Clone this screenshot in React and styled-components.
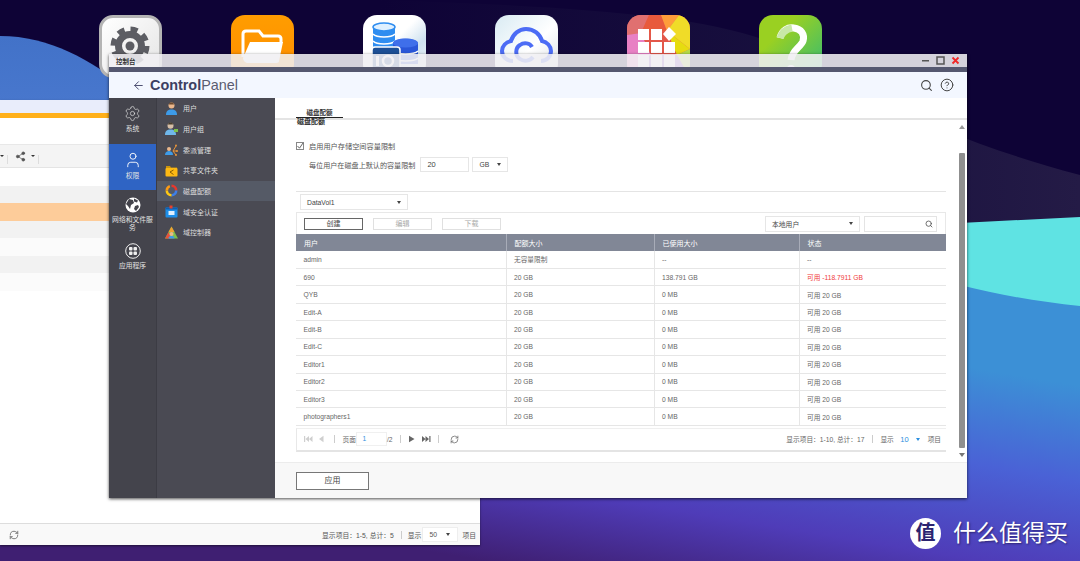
import React from 'react';
import styled, { createGlobalStyle } from 'styled-components';
import { ArrowLeft, CircleHelp, RefreshCw, Search, Settings, Share2, User } from 'lucide-react';

const FONT = '"Liberation Sans", "Noto Sans CJK SC", sans-serif';

const rows = [
	['admin', '无容量限制', '--', '--'],
	['690', '20 GB', '138.791 GB', '可用 -118.7911 GB'],
	['QYB', '20 GB', '0 MB', '可用 20 GB'],
	['Edit-A', '20 GB', '0 MB', '可用 20 GB'],
	['Edit-B', '20 GB', '0 MB', '可用 20 GB'],
	['Edit-C', '20 GB', '0 MB', '可用 20 GB'],
	['Editor1', '20 GB', '0 MB', '可用 20 GB'],
	['Editor2', '20 GB', '0 MB', '可用 20 GB'],
	['Editor3', '20 GB', '0 MB', '可用 20 GB'],
	['photographers1', '20 GB', '0 MB', '可用 20 GB'],
];

const backStripes = ['#ffffff', '#f2f2f2', '#fdcc9a', '#f2f2f2', '#fbfbfb', '#f2f2f2', '#fbfbfb'];

function GearTile() {
	return (
		<AppTile $bg="linear-gradient(135deg, #ffffff, #e4e4e4)" $border="3px solid #b4b4b4">
			<svg width="57" height="57" viewBox="0 0 57 57">
				<circle cx="28" cy="28" r="16.5" fill="none" stroke="#5c5d63" strokeWidth="6" strokeDasharray="7 5.96" />
				<circle cx="28" cy="28" r="11.5" fill="none" stroke="#5c5d63" strokeWidth="7" />
				<circle cx="28" cy="28" r="4.5" fill="#5c5d63" />
			</svg>
		</AppTile>
	);
}

function FolderTile() {
	return (
		<AppTile $bg="linear-gradient(#ff9d00, #ff8c00)">
			<svg width="63" height="63" viewBox="0 0 63 63">
				<path d="M12 42V19c0-2 1-3 3-3h13l4 5h15c2 0 3 1 3 3v4" fill="none" stroke="#fff" strokeWidth="3" />
				<path d="M19 27h33l-4 19c0 1-1 2-3 2H17c-2 0-5-2-5-5z" fill="#fff" />
			</svg>
		</AppTile>
	);
}

function DriveTile() {
	return (
		<AppTile $bg="linear-gradient(135deg, #ffffff 45%, #cfe2f0 68%, #f4f8fb)">
			<svg width="63" height="63" viewBox="0 0 63 63">
				<path d="M10 12c0-5 22-5 22 0v24H10z" fill="#2f8df0" />
				<ellipse cx="21" cy="12" rx="11" ry="4" fill="#dff0ff" stroke="#2f8df0" strokeWidth="1.5" />
				<path d="M10 19c4 4 18 4 22 0M10 26c4 4 18 4 22 0" fill="none" stroke="#fff" strokeWidth="1.6" />
				<path d="M30 36V29c0-7 25-7 25 0v20H30z" fill="#2a56d8" />
				<ellipse cx="42.5" cy="28" rx="12.5" ry="4.5" fill="#3f6fea" />
				<path d="M30 36c4 4 21 4 25 0M30 43c4 4 21 4 25 0" fill="none" stroke="#fff" strokeWidth="1.5" />
				<rect x="9" y="32" width="28" height="30" rx="3" fill="#1c4f96" stroke="#fff" strokeWidth="1.5" />
				<rect x="13" y="41" width="3" height="10" fill="#fff" />
				<circle cx="25" cy="46" r="5" fill="none" stroke="#fff" strokeWidth="2.5" />
			</svg>
		</AppTile>
	);
}

function CloudTile() {
	return (
		<AppTile $bg="linear-gradient(135deg, #d9ebf3, #ffffff 55%, #d8dde2)">
			<svg width="63" height="63" viewBox="0 0 63 63">
				<path
					d="M18 46c-6 0-11-4-11-10 0-5 4-9 9-10 2-7 8-12 15-12 8 0 14 5 16 12 5 1 9 5 9 10s-4 10-10 10"
					fill="none"
					stroke="#4c6cf5"
					strokeWidth="4"
				/>
				<path d="M37 32c-2-4-8-5-12-2-5 3-5 11 0 14 4 3 10 2 13-2" fill="none" stroke="#4c6cf5" strokeWidth="4" />
			</svg>
		</AppTile>
	);
}

function AppsTile() {
	return (
		<AppTile $bg="#e2655f">
			<svg width="63" height="63" viewBox="0 0 63 63">
				<polygon points="0,0 22,0 14,18 0,20" fill="#e07070" />
				<polygon points="22,0 34,0 40,16 14,18" fill="#e85a3c" />
				<polygon points="34,0 52,0 40,16" fill="#ff9d3a" />
				<polygon points="52,0 63,0 63,34 40,16" fill="#f0dc28" />
				<polygon points="0,20 14,18 24,40 0,63" fill="#e880c4" />
				<polygon points="14,18 40,16 50,40 24,40" fill="#e3574a" />
				<polygon points="40,16 63,34 50,40" fill="#e6dc10" />
				<polygon points="63,34 63,63 50,40" fill="#b4dc46" />
				<polygon points="24,40 50,40 63,63 0,63" fill="#8a52c8" />
				<rect x="11" y="14" width="11" height="11" fill="#fff" />
				<rect x="24" y="14" width="11" height="11" fill="#fff" />
				<rect x="11" y="27" width="11" height="11" fill="#fff" />
				<rect x="24" y="27" width="11" height="11" fill="#fff" />
				<rect x="37" y="27" width="11" height="11" fill="#fff" />
				<polygon points="42,12 49,19 42,26 36,19" fill="#fff" />
				<rect x="11" y="40" width="11" height="12" fill="#fff" />
				<rect x="24" y="40" width="11" height="12" fill="#fff" />
				<rect x="37" y="40" width="11" height="12" fill="#fff" />
			</svg>
		</AppTile>
	);
}

function HelpTile() {
	return (
		<AppTile $bg="linear-gradient(135deg, #9ad022 30%, #3fbd6a 90%)">
			<svg width="63" height="63" viewBox="0 0 63 63">
				<path d="M21 23c2-8 8-11 14-10 7 1 11 6 9 13-2 6-11 9-12 19" fill="none" stroke="#fff" strokeWidth="7" />
				<path d="M21 23c2-6 7-9 12-10" fill="none" stroke="#c8e8a8" strokeWidth="7" />
				<circle cx="32" cy="54" r="4" fill="#fff" />
			</svg>
		</AppTile>
	);
}

// small coloured icons of the second menu column
function MenuGlyph({ kind }) {
	if (kind === 'user') {
		return (
			<svg width="13" height="13" viewBox="0 0 13 13">
				<circle cx="6.500" cy="3.600" r="3" fill="#eab78c" />
				<path d="M4 1.500c1-1.500 5-1.500 5 1H4z" fill="#6b4a2e" />
				<path d="M1 13c0-4 2-5.500 5.500-5.500S12 9 12 13z" fill="#3d9be8" />
			</svg>
		);
	}
	if (kind === 'group') {
		return (
			<svg width="13" height="13" viewBox="0 0 13 13">
				<circle cx="5.500" cy="3.800" r="3" fill="#d8c0a8" />
				<path d="M3 2c1-2 5-2 5 0.500H3z" fill="#4a4030" />
				<path d="M0 13c0-4 2-5.500 5.500-5.500S11 9 11 13z" fill="#6fb7ea" />
				<path d="M9 7h4v3H9z" fill="#7cc04a" />
			</svg>
		);
	}
	if (kind === 'delegate') {
		return (
			<svg width="13" height="13" viewBox="0 0 13 13">
				<circle cx="4" cy="6" r="2" fill="#eab78c" />
				<path d="M0 12c0-3 2-4 4-4s4 1 4 4z" fill="#3d9be8" />
				<path d="M8 8l3-5M8 8l4 0M8 8l3 4" stroke="#e8943a" strokeWidth="1" />
				<circle cx="11" cy="2.500" r="1" fill="#e8943a" />
				<circle cx="12" cy="8" r="1" fill="#e8943a" />
				<circle cx="11" cy="12" r="1" fill="#e8943a" />
			</svg>
		);
	}
	if (kind === 'share') {
		return (
			<svg width="13" height="13" viewBox="0 0 13 13">
				<path d="M1 2h4l1 1.500h6V5H1z" fill="#c99410" />
				<rect x="0.500" y="4" width="12" height="8.500" rx="1" fill="#fdb813" />
				<path d="M8.500 6L5 8l3.500 2.500" fill="none" stroke="#7a5200" strokeWidth="0.900" />
			</svg>
		);
	}
	if (kind === 'quota') {
		return (
			<svg width="13" height="13" viewBox="0 0 13 13" fill="none" strokeWidth="2.600">
				<path d="M6.500 1.800a4.700 4.700 0 0 1 4.700 4.700" stroke="#e8372c" />
				<path d="M11.200 6.500a4.700 4.700 0 0 1-4.700 4.700" stroke="#3d7fe8" />
				<path d="M6.500 11.200a4.700 4.700 0 0 1-4.700-4.700" stroke="#fdc813" />
				<path d="M1.800 6.500a4.700 4.700 0 0 1 3-4.400" stroke="#fd9a13" />
			</svg>
		);
	}
	if (kind === 'auth') {
		return (
			<svg width="13" height="13" viewBox="0 0 13 13">
				<rect x="0.500" y="2.500" width="12" height="10" rx="1" fill="#1d8ee8" />
				<rect x="0.500" y="2.500" width="12" height="2" fill="#0e5fb0" />
				<rect x="4.500" y="0.500" width="3" height="3" fill="#e8402c" />
				<rect x="3.500" y="6" width="6" height="4" fill="#dff0ff" />
			</svg>
		);
	}
	return (
		<svg width="13" height="13" viewBox="0 0 13 13">
			<polygon points="6.500,0.500 13,12.500 0,12.500" fill="#7cc04a" />
			<polygon points="6.500,0.500 9.500,6 3.500,6" fill="#f0a030" />
			<polygon points="0,12.500 3.500,6 6.500,12.500" fill="#e8503c" />
			<circle cx="6.500" cy="8" r="2" fill="#eab78c" />
			<path d="M3.500 12.500c0-2 1.500-2.500 3-2.500s3 .5 3 2.500z" fill="#3d9be8" />
		</svg>
	);
}

function PageGlyph({ kind, dim }) {
	const color = dim ? '#cfcfcf' : '#666';
	const shapes = {
		first: 'M0 1h1.200v6H0zM1.500 4L5 1v6zM5 4l3.500-3v6z',
		prev: 'M1 4l4.500-3.200v6.400z',
		next: 'M1 .8L6.500 4 1 7.200z',
		last: 'M0 1l3.500 3L0 7zM3.500 1L7 4 3.500 7zM7.300 1h1.200v6H7.300z',
	};
	return (
		<svg width="9" height="8" viewBox="0 0 9 8">
			<path d={shapes[kind]} fill={color} />
		</svg>
	);
}

function App() {
	return (
		<Desktop>
			<GlobalStyle />
			<Wallpaper viewBox="0 0 1080 561" preserveAspectRatio="none">
				<defs>
					<linearGradient id="lower" x1="0.9" y1="0.3" x2="0.45" y2="1">
						<stop offset="0" stopColor="#3c90d6" />
						<stop offset="0.35" stopColor="#4a62d6" />
						<stop offset="0.7" stopColor="#4f3cb8" />
						<stop offset="1" stopColor="#3f1f72" />
					</linearGradient>
					<linearGradient id="hill" x1="0" y1="0" x2="0" y2="1">
						<stop offset="0" stopColor="#4272c8" />
						<stop offset="1" stopColor="#5a86dc" />
					</linearGradient>
					<linearGradient id="haze" x1="0" y1="0" x2="1" y2="0">
						<stop offset="0" stopColor="#0e0336" />
						<stop offset="0.6" stopColor="#18103e" />
						<stop offset="1" stopColor="#241b46" />
					</linearGradient>
				</defs>
				<rect width="1080" height="561" fill="#0e0336" />
				<path d="M380 0C560 6 700 14 770 42 860 90 930 135 1080 175V240H380z" fill="url(#haze)" />
				<path d="M960 223L1080 217V320H960z" fill="#5fe3e3" />
				<path d="M0 36C50 36 90 60 130 90V300H0z" fill="url(#hill)" />
				<path d="M480 300H960V285C1000 295 1040 302 1080 306V561H0V480z" fill="url(#lower)" />
			</Wallpaper>

			<AppDock>
				<GearTile />
				<FolderTile />
				<DriveTile />
				<CloudTile />
				<AppsTile />
				<HelpTile />
			</AppDock>

			<BackWindow>
				<BackHeader />
				<BackAccent />
				<BackBlank />
				<BackToolbar>
					<TinyCaret />
					<ToolDivider />
					<ShareSlot>
						<Share2 size={11} color="#555" fill="#555" strokeWidth={1.5} />
					</ShareSlot>
					<TinyCaret />
					<ToolDivider />
				</BackToolbar>
				{backStripes.map((color, i) => (
					<BackStripe key={i} $color={color} />
				))}
				<BackFill />
				<BackFooter>
					<RefreshCw size={10} color="#666" />
					<BackSummary>
						<span>显示项目：1-5, 总计：5</span>
						<PagerDivider />
						<span>显示</span>
						<BackSizeSelect>
							50
							<Caret />
						</BackSizeSelect>
						<span>项目</span>
					</BackSummary>
				</BackFooter>
			</BackWindow>

			<ControlWindow>
				<TitleBar>
					<TitleText>控制台</TitleText>
					<WindowButtons>
						<svg width="9" height="9" viewBox="0 0 9 9">
							<rect x="1" y="4" width="7" height="1.500" fill="#555" />
						</svg>
						<svg width="9" height="9" viewBox="0 0 9 9">
							<rect x="1" y="1" width="7" height="7" fill="none" stroke="#555" strokeWidth="1.500" />
						</svg>
						<svg width="9" height="9" viewBox="0 0 9 9">
							<path d="M1.500 1.500l6 6M7.500 1.500l-6 6" stroke="#f02828" strokeWidth="1.800" />
						</svg>
					</WindowButtons>
				</TitleBar>
				<AccentStrip />
				<Header>
					<ArrowLeft size={13} color="#4a4d70" strokeWidth={1.8} />
					<Brand>
						<strong>Control</strong>Panel
					</Brand>
					<HeaderTools>
						<Search size={13} color="#444" strokeWidth={2} />
						<CircleHelp size={14} color="#444" strokeWidth={1.7} />
					</HeaderTools>
				</Header>
				<Body>
					<Rail>
						<RailItem>
							<Settings size={17} color="#ddd" strokeWidth={1} />
							<RailLabel>系统</RailLabel>
						</RailItem>
						<RailItem $active>
							<User size={18} color="#fff" strokeWidth={1.2} />
							<RailLabel>权限</RailLabel>
						</RailItem>
						<RailItem>
							<svg width="16" height="16" viewBox="0 0 16 16">
								<circle cx="8" cy="8" r="7.500" fill="#fff" />
								<path d="M4 2l4 1 1 3-3 2-1 4-2-3-2-2zM10 9l3-1 1 2-3 4-2-2z" fill="#44444c" />
								<path d="M9 1.500l4 2-1 2-3-1z" fill="#44444c" />
							</svg>
							<RailLabel>网络和文件服务</RailLabel>
						</RailItem>
						<RailItem>
							<svg width="16" height="16" viewBox="0 0 16 16">
								<circle cx="8" cy="8" r="7.300" fill="none" stroke="#eee" strokeWidth="1" />
								<rect x="4" y="4" width="3.500" height="3.500" rx="1" fill="#eee" />
								<rect x="8.500" y="4" width="3.500" height="3.500" rx="1" fill="#eee" />
								<rect x="4" y="8.500" width="3.500" height="3.500" rx="1" fill="#eee" />
								<rect x="8.500" y="8.500" width="3.500" height="3.500" rx="1" fill="#eee" />
							</svg>
							<RailLabel>应用程序</RailLabel>
						</RailItem>
					</Rail>
					<SubMenu>
						<SubItem><MenuGlyph kind="user" />用户</SubItem>
						<SubItem><MenuGlyph kind="group" />用户组</SubItem>
						<SubItem><MenuGlyph kind="delegate" />委派管理</SubItem>
						<SubItem><MenuGlyph kind="share" />共享文件夹</SubItem>
						<SubItem $active><MenuGlyph kind="quota" />磁盘配额</SubItem>
						<SubItem><MenuGlyph kind="auth" />域安全认证</SubItem>
						<SubItem><MenuGlyph kind="domain" />域控制器</SubItem>
					</SubMenu>
					<Main>
						<TabBar>
							<Tab>磁盘配额</Tab>
						</TabBar>
						<ScrollArea>
							<Content>
								<SectionTitle>磁盘配额</SectionTitle>
								<CheckRow>
									<CheckBox>
										<svg width="8" height="8" viewBox="0 0 8 8">
											<path d="M1.500 4l2 2.200L7 1" fill="none" stroke="#555" strokeWidth="0.900" />
										</svg>
									</CheckBox>
									启用用户存储空间容量限制
								</CheckRow>
								<QuotaRow>
									每位用户在磁盘上默认的容量限制
									<QuotaInput>20</QuotaInput>
									<Select $width={36}>
										GB
										<Caret />
									</Select>
								</QuotaRow>
								<QuotaPanel>
									<VolumeBar>
										<Select $width={108} $height={16}>
											DataVol1
											<Caret />
										</Select>
									</VolumeBar>
									<ActionBar>
										<ActionButton $primary>创建</ActionButton>
										<ActionButton>编辑</ActionButton>
										<ActionButton>下载</ActionButton>
										<ActionRight>
											<Select $width={95} $height={16}>
												本地用户
												<Caret />
											</Select>
											<SearchBox>
												<Search size={8} color="#555" strokeWidth={2.5} />
											</SearchBox>
										</ActionRight>
									</ActionBar>
									<QuotaTable>
										<colgroup>
											<col width="210" />
											<col width="148" />
											<col width="145" />
											<col width="147" />
										</colgroup>
										<thead>
											<tr>
												<HeadCell>用户</HeadCell>
												<HeadCell>配额大小</HeadCell>
												<HeadCell>已使用大小</HeadCell>
												<HeadCell>状态</HeadCell>
											</tr>
										</thead>
										<tbody>
											{rows.map((row) => (
												<tr key={row[0]}>
													<Cell>{row[0]}</Cell>
													<Cell>{row[1]}</Cell>
													<Cell>{row[2]}</Cell>
													<Cell $danger={row[0] === '690'}>{row[3]}</Cell>
												</tr>
											))}
										</tbody>
									</QuotaTable>
									<Pager>
										<PagerSide>
											<PageGlyph kind="first" dim />
											<PageGlyph kind="prev" dim />
											<PagerDivider />
											<span>页面</span>
											<PageInput>1</PageInput>
											<span>/2</span>
											<PagerDivider />
											<PageGlyph kind="next" />
											<PageGlyph kind="last" />
											<PagerDivider />
											<RefreshSlot>
												<RefreshCw size={9} color="#666" />
											</RefreshSlot>
										</PagerSide>
										<PagerSide>
											<span>显示项目：1-10, 总计：17</span>
											<PagerDivider />
											<span>显示</span>
											<BlueValue>10</BlueValue>
											<Caret $blue />
											<span>项目</span>
										</PagerSide>
									</Pager>
								</QuotaPanel>
							</Content>
							<ScrollTrack>
								<ArrowUp />
								<ScrollThumb />
								<ArrowDown />
							</ScrollTrack>
						</ScrollArea>
						<Footer>
							<ApplyButton>应用</ApplyButton>
						</Footer>
					</Main>
				</Body>
			</ControlWindow>

			<Watermark>
				<WatermarkBadge>值</WatermarkBadge>
				<WatermarkText>什么值得买</WatermarkText>
			</Watermark>
		</Desktop>
	);
}

const GlobalStyle = createGlobalStyle`
	html, body {
		margin: 0;
		padding: 0;
		overflow: hidden;
	}
	body {
		font-family: ${FONT};
	}
`;

const Desktop = styled.div`
	position: relative;
	width: 1080px;
	height: 561px;
	overflow: hidden;
	background: #0e0336;
`;

const Wallpaper = styled.svg`
	position: absolute;
	inset: 0;
	width: 1080px;
	height: 561px;
`;

const AppDock = styled.div`
	position: absolute;
	top: 15px;
	left: 99px;
	display: flex;
	gap: 69px;
`;

const AppTile = styled.div`
	width: 63px;
	height: 63px;
	box-sizing: border-box;
	border-radius: 14px;
	overflow: hidden;
	background: ${(p) => p.$bg};
	border: ${(p) => p.$border || 'none'};

	svg {
		display: block;
	}
`;

const BackWindow = styled.div`
	position: absolute;
	top: 100px;
	left: 0;
	width: 480px;
	height: 445px;
	display: flex;
	flex-direction: column;
	background: #fff;
	box-shadow: 0 1px 2px rgba(0, 0, 0, 0.5);
`;

const BackHeader = styled.div`
	height: 13px;
	background: #e9edfb;
`;

const BackAccent = styled.div`
	height: 5px;
	background: #ffb01a;
`;

const BackBlank = styled.div`
	height: 26px;
	background: #fff;
`;

const BackToolbar = styled.div`
	height: 24px;
	display: flex;
	align-items: center;
	gap: 3px;
	background: #f4f4f4;
	border-top: 1px solid #e8e8e8;
	border-bottom: 1px solid #e4e4e4;
	box-sizing: border-box;
`;

const ShareSlot = styled.span`
	display: flex;
	margin: 0 2px 0 4px;
`;

const TinyCaret = styled.span`
	width: 0;
	height: 0;
	border-left: 2px solid transparent;
	border-right: 2px solid transparent;
	border-top: 2.500px solid #333;
`;

const ToolDivider = styled.span`
	width: 1px;
	height: 9px;
	margin-top: 6px;
	background: #ddd;
`;

const BackStripe = styled.div`
	height: 17.500px;
	background: ${(p) => p.$color};
`;

const BackFill = styled.div`
	flex: 1;
	background: #fff;
`;

const BackFooter = styled.div`
	height: 21px;
	display: flex;
	align-items: center;
	justify-content: space-between;
	padding: 0 4px 0 9px;
	background: #f9f9f9;
	border-top: 1px solid #ddd;
`;

const BackSummary = styled.div`
	display: flex;
	align-items: center;
	gap: 3px;
	font-size: 6.800px;
	color: #555;

	span:first-child {
		margin-right: 1px;
	}
`;

const BackSizeSelect = styled.div`
	width: 36px;
	height: 15px;
	box-sizing: border-box;
	padding: 0 6px;
	margin: 0 1px 0 -2px;
	display: flex;
	align-items: center;
	justify-content: space-between;
	background: #fff;
	border: 1px solid #eee;
`;

const ControlWindow = styled.div`
	position: absolute;
	top: 54px;
	left: 109px;
	width: 858px;
	height: 444px;
	display: flex;
	flex-direction: column;
	box-shadow: 0 1px 3px rgba(0, 0, 0, 0.7);
`;

const TitleBar = styled.div`
	height: 13px;
	display: flex;
	align-items: center;
	justify-content: space-between;
	padding: 0 7px;
	background: rgba(240, 239, 243, 0.88);
`;

const TitleText = styled.span`
	font-size: 6.500px;
	font-weight: 700;
	color: #333;
`;

const WindowButtons = styled.div`
	display: flex;
	gap: 6px;

	svg {
		display: block;
	}
`;

const AccentStrip = styled.div`
	height: 5px;
	background: #555870;
`;

const Header = styled.div`
	height: 26px;
	display: flex;
	align-items: center;
	padding: 0 13px 0 23px;
	background: #f3f7ff;
`;

const Brand = styled.div`
	margin-left: 5px;
	font-size: 14.400px;
	color: #5a5c70;

	strong {
		color: #3c3f63;
	}
`;

const HeaderTools = styled.div`
	margin-left: auto;
	display: flex;
	align-items: center;
	gap: 7px;
`;

const Body = styled.div`
	flex: 1;
	min-height: 0;
	display: flex;
`;

const Rail = styled.nav`
	width: 48px;
	background: #44444c;
	border-right: 1px solid #3c3c44;
	box-sizing: border-box;
`;

const RailItem = styled.div`
	height: 46px;
	box-sizing: border-box;
	padding: 7px 2px 0;
	display: flex;
	flex-direction: column;
	align-items: center;
	gap: 3px;
	text-align: center;
	background: ${(p) => (p.$active ? '#2f64c4' : 'transparent')};
`;

const RailLabel = styled.span`
	font-size: 6.800px;
	line-height: 7.500px;
	color: #e2e2e2;
`;

const SubMenu = styled.nav`
	width: 118px;
	background: #4a4a53;
`;

const SubItem = styled.div`
	height: 20.670px;
	display: flex;
	align-items: center;
	gap: 5px;
	padding-left: 8px;
	font-size: 7px;
	color: #dedede;
	background: ${(p) => (p.$active ? '#555a66' : 'transparent')};

	svg {
		flex: none;
	}
`;

const Main = styled.main`
	flex: 1;
	min-width: 0;
	display: flex;
	flex-direction: column;
	background: #fff;
`;

const TabBar = styled.div`
	height: 20px;
	padding-left: 21px;
	border-bottom: 2px solid #e4e4e4;
`;

const Tab = styled.div`
	width: 47px;
	height: 20px;
	box-sizing: border-box;
	padding-top: 11px;
	border-bottom: 1.500px solid #222;
	font-size: 6.500px;
	line-height: 7px;
	font-weight: 700;
	text-align: center;
	color: #333;
`;

const ScrollArea = styled.div`
	height: 342px;
	display: flex;
`;

const Content = styled.div`
	flex: 1;
	min-width: 0;
	padding-left: 21px;
	padding-right: 12px;
`;

const SectionTitle = styled.div`
	margin: -2px 0 0 1px;
	height: 8px;
	font-size: 7px;
	line-height: 8px;
	font-weight: 700;
	color: #333;
`;

const CheckRow = styled.div`
	margin-top: 14px;
	height: 12px;
	display: flex;
	align-items: center;
	gap: 5px;
	font-size: 7.200px;
	color: #555;
`;

const CheckBox = styled.span`
	width: 6px;
	height: 6px;
	display: flex;
	align-items: center;
	justify-content: center;
	border: 1px solid #888;
	background: #fff;

	svg {
		flex: none;
	}
`;

const QuotaRow = styled.div`
	margin-top: 5px;
	margin-left: 13px;
	height: 15px;
	display: flex;
	align-items: center;
	font-size: 7.100px;
	color: #555;
`;

const QuotaInput = styled.div`
	margin: 0 3px 0 5px;
	width: 49px;
	height: 15px;
	box-sizing: border-box;
	padding-left: 6px;
	border: 1px solid #e6e6e6;
	font-size: 7.500px;
	line-height: 13px;
	color: #444;
`;

const Select = styled.div`
	width: ${(p) => p.$width}px;
	height: ${(p) => p.$height || 15}px;
	box-sizing: border-box;
	padding: 0 6px;
	display: flex;
	align-items: center;
	justify-content: space-between;
	border: 1px solid #e6e6e6;
	background: #fff;
	font-size: 6.800px;
	color: #444;
`;

const Caret = styled.span`
	width: 0;
	height: 0;
	margin-left: ${(p) => (p.$blue ? '3px' : '0')};
	margin-right: ${(p) => (p.$blue ? '3px' : '0')};
	border-left: 2.500px solid transparent;
	border-right: 2.500px solid transparent;
	border-top: 3px solid ${(p) => (p.$blue ? '#2b8fe0' : '#444')};
`;

const QuotaPanel = styled.section`
	margin-top: 19px;
	border-top: 1px solid #e4e4e4;
`;

const VolumeBar = styled.div`
	height: 20px;
	padding: 2px 0 0 4px;
	box-sizing: border-box;
`;

const ActionBar = styled.div`
	height: 22px;
	box-sizing: border-box;
	display: flex;
	align-items: center;
	gap: 10px;
	padding: 0 8px 0 7px;
	border: 1px solid #e8e8e8;
	border-bottom: none;
`;

const ActionButton = styled.div`
	width: 59px;
	height: 12px;
	box-sizing: border-box;
	border: 1px solid ${(p) => (p.$primary ? '#666' : '#e0e0e0')};
	font-size: 7px;
	line-height: 10px;
	text-align: center;
	color: ${(p) => (p.$primary ? '#444' : '#aaa')};
`;

const ActionRight = styled.div`
	margin-left: auto;
	display: flex;
	gap: 4px;
`;

const SearchBox = styled.div`
	width: 73px;
	height: 16px;
	box-sizing: border-box;
	padding-right: 3px;
	display: flex;
	align-items: center;
	justify-content: flex-end;
	border: 1px solid #e4e4e4;
`;

const QuotaTable = styled.table`
	width: 650px;
	table-layout: fixed;
	border-collapse: collapse;
`;

const HeadCell = styled.th`
	height: 17px;
	padding: 0 0 0 8px;
	background: #818796;
	border-left: 1px solid #a8acb8;
	font-size: 7px;
	font-weight: 400;
	text-align: left;
	color: #fff;

	&:first-child {
		border-left: none;
	}
`;

const Cell = styled.td`
	height: 17.440px;
	box-sizing: border-box;
	padding: 0 0 0 7.500px;
	border-bottom: 1px solid #e6e6e6;
	border-left: 1px solid #e6e6e6;
	font-size: 6.700px;
	color: ${(p) => (p.$danger ? '#f03a3a' : '#666')};

	&:first-child {
		border-left: none;
	}
`;

const Pager = styled.div`
	margin-top: 2px;
	height: 24px;
	box-sizing: border-box;
	display: flex;
	align-items: center;
	justify-content: space-between;
	padding: 0 5px 0 7px;
	border-top: 1px solid #efefef;
	border-left: 1px solid #e8e8e8;
	border-bottom: 2px solid #e4e4e4;
	font-size: 6.700px;
	color: #666;
`;

const PagerSide = styled.div`
	display: flex;
	align-items: center;
	gap: 4.500px;

	svg {
		flex: none;
	}
`;

const PagerDivider = styled.span`
	width: 1px;
	height: 8px;
	margin: 0 3px;
	background: #ccc;
`;

const PageInput = styled.div`
	width: 31px;
	height: 14px;
	box-sizing: border-box;
	padding-left: 5px;
	margin: 0 -5px 0 -4px;
	border: 1px solid #f0f0f0;
	line-height: 12px;
	color: #2b8fe0;
`;

const RefreshSlot = styled.span`
	display: flex;
	margin-left: 3px;
`;

const BlueValue = styled.span`
	color: #2b8fe0;
	font-size: 7.500px;
	margin-left: 2px;
`;

const ScrollTrack = styled.div`
	width: 9px;
	display: flex;
	flex-direction: column;
	align-items: center;
	padding-right: 2px;
	box-sizing: border-box;
`;

const ArrowUp = styled.span`
	margin-top: 5px;
	width: 0;
	height: 0;
	border-left: 3px solid transparent;
	border-right: 3px solid transparent;
	border-bottom: 4px solid #999;
`;

const ScrollThumb = styled.div`
	margin-top: 24px;
	width: 6px;
	height: 295px;
	border-radius: 1px;
	background: #8f8f8f;
`;

const ArrowDown = styled.span`
	margin-top: 5px;
	width: 0;
	height: 0;
	border-left: 3px solid transparent;
	border-right: 3px solid transparent;
	border-top: 4px solid #777;
`;

const Footer = styled.footer`
	flex: 1;
	display: flex;
	align-items: center;
	padding-left: 21px;
	background: #f8f8f8;
	border-top: 1px solid #ececec;
`;

const ApplyButton = styled.div`
	width: 73px;
	height: 18px;
	box-sizing: border-box;
	border: 1px solid #777;
	background: #fff;
	font-size: 8px;
	line-height: 16px;
	text-align: center;
	color: #444;
`;

const Watermark = styled.div`
	position: absolute;
	left: 910px;
	top: 518px;
	display: flex;
	align-items: center;
	gap: 12px;
`;

const WatermarkBadge = styled.div`
	width: 31px;
	height: 31px;
	border-radius: 50%;
	background: #fff;
	font-size: 20px;
	font-weight: 700;
	line-height: 31px;
	text-align: center;
	color: #2c2470;
`;

const WatermarkText = styled.div`
	font-size: 23px;
	line-height: 31px;
	color: #fff;
	text-shadow: 1px 1px 2px rgba(30, 20, 80, 0.7);
`;

export default App;
